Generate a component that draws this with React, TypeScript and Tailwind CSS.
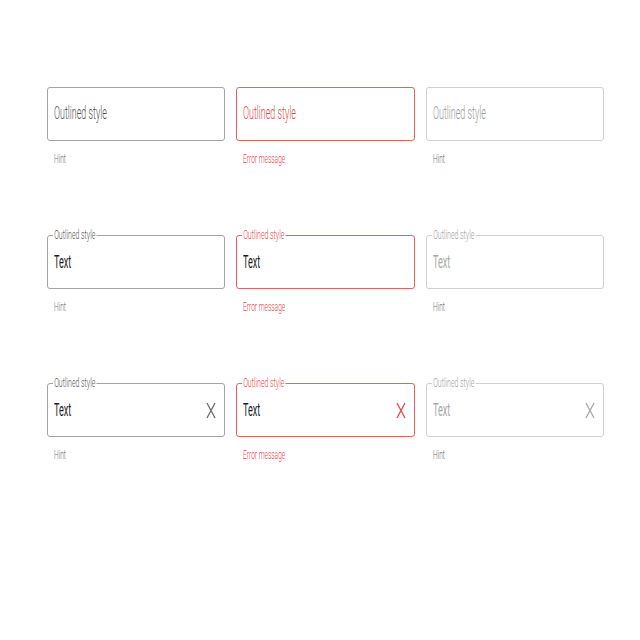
import React from "react";

type Variant = "normal" | "error" | "disabled";

const border: Record<Variant, string> = {
  normal: "border-[#a3a3a3]",
  error: "border-[#e36262]",
  disabled: "border-[#d0d0d0]",
};

const valueColor: Record<Variant, string> = {
  normal: "text-[#1e1e1e]",
  error: "text-[#1e1e1e]",
  disabled: "text-[#a8a8a8]",
};

const placeholderColor: Record<Variant, string> = {
  normal: "text-[#555555]",
  error: "text-[#e04a4a]",
  disabled: "text-[#9a9a9a]",
};

const labelColor: Record<Variant, string> = {
  normal: "text-[#555555]",
  error: "text-[#e04a4a]",
  disabled: "text-[#a0a0a0]",
};

const iconColor: Record<Variant, string> = {
  normal: "text-[#6a6a6a]",
  error: "text-[#e04a4a]",
  disabled: "text-[#a8a8a8]",
};

function ClearIcon({ className }: { className?: string }) {
  return (
    <svg width="10" height="17" viewBox="0 0 10 17" className={className}>
      <path d="M1 1 L9 16 M9 1 L1 16" stroke="currentColor" strokeWidth="1.3" fill="none" />
    </svg>
  );
}

function Field({ variant, kind }: { variant: Variant; kind: "placeholder" | "filled" | "clear" }) {
  const helper = variant === "error" ? "Error message" : "Hint";
  return (
    <div className="flex flex-col">
      <div className={`relative flex h-[54px] items-center rounded-[3px] border pl-[6px] pr-[8px] ${border[variant]}`}>
        {kind !== "placeholder" && (
          <span
            className={`absolute left-[5px] top-[-8px] inline-block origin-left scale-x-[0.58] bg-white px-[2px] text-[12px] font-light leading-[14px] ${labelColor[variant]}`}
          >
            Outlined style
          </span>
        )}
        <div className={`flex-1 ${kind === "placeholder" ? "" : "pt-[2px]"}`}>
          {kind === "placeholder" ? (
            <span className={`inline-block origin-left scale-x-[0.47] text-[19px] font-light leading-[22px] ${placeholderColor[variant]}`}>
              Outlined style
            </span>
          ) : (
            <span className={`inline-block origin-left scale-x-[0.48] text-[19px] leading-[22px] ${valueColor[variant]}`}>
              Text
            </span>
          )}
        </div>
        {kind === "clear" && <ClearIcon className={iconColor[variant]} />}
      </div>
      <div className="mt-[5px] h-[16px] pl-[7px]">
        <span
          className={`inline-block origin-left scale-x-[0.55] text-[12px] font-light leading-[16px] ${
            variant === "error" ? "text-[#e04a4a]" : "text-[#6f6f6f]"
          }`}
        >
          {helper}
        </span>
      </div>
    </div>
  );
}

const variants: Variant[] = ["normal", "error", "disabled"];
const rows: ("placeholder" | "filled" | "clear")[] = ["placeholder", "filled", "clear"];

export default function App() {
  return (
    <div className="h-[640px] w-[640px] bg-white font-['Roboto',sans-serif]">
      <div className="ml-[47px] grid w-[557px] grid-cols-3 gap-x-[11px] gap-y-[73px] pt-[87px]">
        {rows.map((kind) =>
          variants.map((v) => <Field key={kind + v} variant={v} kind={kind} />)
        )}
      </div>
    </div>
  );
}
